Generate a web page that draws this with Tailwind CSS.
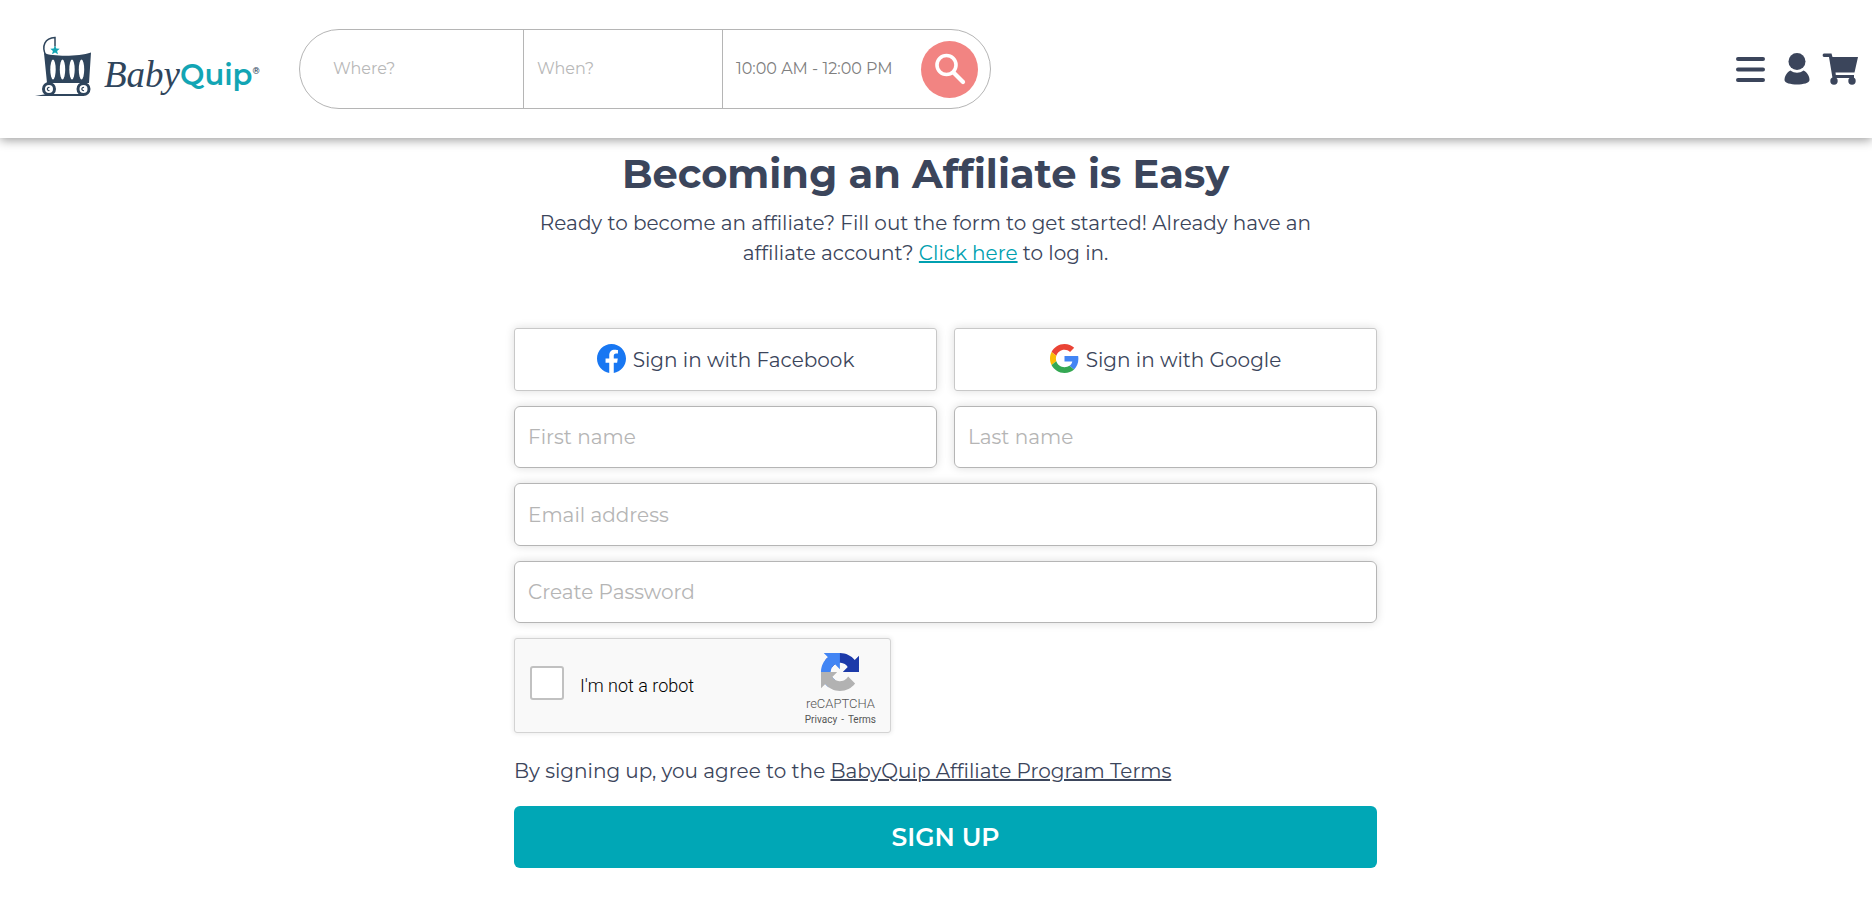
<!DOCTYPE html>
<html lang="en">

<head>
    <meta charset="utf-8">
    <meta name="viewport" content="width=device-width, initial-scale=1">
    <title>BabyQuip Affiliate Program</title>
    <script src="https://cdn.jsdelivr.net/npm/@tailwindcss/browser@4"></script>
</head>

<body class="bg-white font-['Montserrat','Inter',sans-serif] text-[#3b455b]">
    <!-- Top bar -->
    <header class="flex h-[138px] items-center bg-white pl-[34px] pr-[14px] shadow-[0_2px_10px_rgba(0,0,0,0.4)]">
        <a href="#" class="flex w-[265px] shrink-0 items-center" aria-label="BabyQuip">
            <svg class="mb-1 h-[62px] w-[60px] shrink-0" viewBox="0 0 60 62" fill="none">
                <path d="M12 20C7 10 11 2 21 1.500v9" stroke="#2f455c" stroke-width="1.500" />
                <path d="M21 9.500l1.300 3 3.400.3-2.600 2.200.9 3.300-3-1.800-3 1.800.9-3.300-2.600-2.200 3.400-.3z" fill="#12a5b4" />
                <path d="M10 17C18 20.500 44 21 57 16.500L55 47H13z" fill="#2f455c" />
                <g fill="#fff">
                    <ellipse cx="19" cy="33.500" rx="2.700" ry="10" />
                    <ellipse cx="28.500" cy="33.500" rx="2.700" ry="10" />
                    <ellipse cx="38" cy="33.500" rx="2.700" ry="10" />
                    <ellipse cx="47.500" cy="33.500" rx="2.700" ry="10" />
                    <path d="M20 49h28v8H20z" />
                </g>
                <path d="M1 60l12-2h37v2z" fill="#2f455c" />
                <g stroke="#2f455c">
                    <circle cx="15" cy="53" r="5.500" fill="#fff" stroke-width="3" />
                    <circle cx="49.500" cy="53" r="5.500" fill="#fff" stroke-width="3" />
                    <path d="M15.500 51.500a1.600 1.600 0 1 0 0 3M50 51.500a1.600 1.600 0 1 0 0 3" stroke-width="1.200" />
                </g>
            </svg>
            <span class="flex items-center pl-[10px] pt-3 leading-10">
                <span class="font-['Liberation_Serif',serif] text-[37px] italic text-[#2f455c]">Baby</span>
                <span class="text-[29px] font-semibold text-[#12a5b4]">Quip</span>
                <span class="pb-2 text-[9px] leading-4 font-semibold text-[#2f455c]">®</span>
            </span>
        </a>

        <form class="flex h-20 w-[692px] rounded-full border border-[#b5b5b5]">
            <label for="where" class="sr-only">Where?</label>
            <input id="where" type="text" placeholder="Where?"
                   class="w-[224px] border-r border-[#b5b5b5] pl-[33px] text-base outline-none placeholder:text-[#b8b8b8]">
            <label for="when" class="sr-only">When?</label>
            <input id="when" type="text" placeholder="When?"
                   class="w-[199px] border-r border-[#b5b5b5] pl-[13px] text-base outline-none placeholder:text-[#b8b8b8]">
            <div class="flex flex-1 items-center justify-between pl-[13px] pr-3">
                <button type="button" class="text-base text-[#7f7f7f]">10:00 AM - 12:00 PM</button>
                <button type="submit" aria-label="Search"
                        class="flex size-[57px] items-center justify-center rounded-full bg-[#f28482]">
                    <svg class="size-8" viewBox="0 0 32 32" fill="none" stroke="#fff" stroke-linecap="round">
                        <circle cx="12.500" cy="12" r="9.500" stroke-width="3.600" />
                        <path d="M20 20l9 9" stroke-width="4.200" />
                    </svg>
                </button>
            </div>
        </form>

        <nav class="ml-auto flex items-center gap-3">
            <button type="button" aria-label="Menu" class="mr-[7px]">
                <svg class="h-8 w-[29px]" viewBox="0 0 29 32" stroke="#3b455b" stroke-width="4" stroke-linecap="round">
                    <path d="M2 6h25M2 16.500h25M2 27h25" />
                </svg>
            </button>
            <a href="#" aria-label="Account">
                <svg class="h-8 w-[26px]" viewBox="0 0 26 32" fill="#3b455b">
                    <circle cx="13" cy="8.500" r="8.500" />
                    <path d="M6.500 17.500c4 3 9 3 13 0 4 2 6 6 6 9.500 0 6-25 6-25 0 0-3.500 2-7.500 6-9.500z" />
                </svg>
            </a>
            <a href="#" aria-label="Cart">
                <svg class="h-8 w-9" viewBox="0 0 36 32" fill="#3b455b">
                    <path d="M2 .5h7.500L10.500 4H36l-3.500 15.500H13.500l.3 2.500H32v3H10.500L7 4H2a1.800 1.800 0 0 1 0-3.500z" />
                    <circle cx="12" cy="28" r="3.700" />
                    <circle cx="30" cy="28" r="3.700" />
                </svg>
            </a>
        </nav>
    </header>

    <main class="pl-[19px]">
        <div class="mx-auto max-w-[863px]">
            <div class="pr-10 pt-3 text-center">
                <h1 class="text-[40px] font-bold leading-12">Becoming an Affiliate is Easy</h1>
                <p class="mt-[10px] px-6 text-xl leading-[30px]">Ready to become an affiliate? Fill out the form to get started! Already have an
                    affiliate account? <a href="#" class="text-[#00a0b0] underline">Click here</a> to log in.</p>
            </div>

            <form class="mt-[60px] flex flex-col gap-[15px] text-xl">
                <div class="grid grid-cols-2 gap-[17px]">
                    <button type="button"
                            class="flex h-[63px] items-center justify-center gap-[7px] rounded-[3px] border border-[#c8c8c8] shadow-[0_0_10px_rgba(0,0,0,0.14)]">
                        <svg class="mb-[2px] size-[29px]" viewBox="0 0 24 24">
                            <path fill="#1877f2" d="M24 12.073C24 5.405 18.627 0 12 0S0 5.405 0 12.073c0 6.026 4.388 11.020 10.125 11.927v-8.437H7.078v-3.490h3.047V9.413c0-3.026 1.792-4.697 4.533-4.697 1.312 0 2.686.236 2.686.236v2.971H15.830c-1.491 0-1.956.931-1.956 1.886v2.264h3.328l-.532 3.490h-2.796V24C19.612 23.093 24 18.099 24 12.073z" />
                        </svg>
                        Sign in with Facebook
                    </button>
                    <button type="button"
                            class="flex h-[63px] items-center justify-center gap-[7px] rounded-[3px] border border-[#c8c8c8] shadow-[0_0_10px_rgba(0,0,0,0.14)]">
                        <svg class="mb-[2px] size-[29px]" viewBox="0 0 48 48">
                            <path fill="#ea4335" d="M24 9.500c3.540 0 6.710 1.220 9.210 3.600l6.850-6.850C35.900 2.380 30.470 0 24 0 14.620 0 6.510 5.380 2.560 13.220l7.980 6.190C12.430 13.720 17.740 9.500 24 9.500z" />
                            <path fill="#4285f4" d="M46.980 24.550c0-1.570-.15-3.090-.38-4.550H24v9.020h12.940c-.58 2.960-2.260 5.480-4.780 7.180l7.730 6c4.510-4.180 7.090-10.360 7.090-17.650z" />
                            <path fill="#fbbc05" d="M10.530 28.590c-.48-1.450-.76-2.990-.76-4.590s.27-3.140.76-4.590l-7.980-6.190C.92 16.460 0 20.120 0 24c0 3.880.92 7.540 2.560 10.780l7.970-6.190z" />
                            <path fill="#34a853" d="M24 48c6.480 0 11.930-2.130 15.890-5.810l-7.730-6c-2.150 1.450-4.920 2.300-8.160 2.300-6.260 0-11.570-4.220-13.470-9.910l-7.980 6.190C6.510 42.620 14.620 48 24 48z" />
                        </svg>
                        Sign in with Google
                    </button>
                </div>

                <div class="grid grid-cols-2 gap-[17px]">
                    <div>
                        <label for="first-name" class="sr-only">First name</label>
                        <input id="first-name" type="text" placeholder="First name"
                               class="block h-[62px] w-full rounded-md border border-[#b5b5b5] px-[13px] shadow-[0_0_10px_rgba(0,0,0,0.14)] placeholder:text-[#b5b5b5]">
                    </div>
                    <div>
                        <label for="last-name" class="sr-only">Last name</label>
                        <input id="last-name" type="text" placeholder="Last name"
                               class="block h-[62px] w-full rounded-md border border-[#b5b5b5] px-[13px] shadow-[0_0_10px_rgba(0,0,0,0.14)] placeholder:text-[#b5b5b5]">
                    </div>
                </div>

                <div>
                    <label for="email" class="sr-only">Email address</label>
                    <input id="email" type="email" placeholder="Email address"
                           class="block h-[63px] w-full rounded-md border border-[#b5b5b5] px-[13px] shadow-[0_0_10px_rgba(0,0,0,0.14)] placeholder:text-[#b5b5b5]">
                </div>
                <div>
                    <label for="password" class="sr-only">Create Password</label>
                    <input id="password" type="password" placeholder="Create Password"
                           class="block h-[62px] w-full rounded-md border border-[#b5b5b5] px-[13px] shadow-[0_0_10px_rgba(0,0,0,0.14)] placeholder:text-[#b5b5b5]">
                </div>

                <!-- Captcha -->
                <div class="flex h-[95px] w-[377px] items-center rounded-[3px] border border-[#d3d3d3] bg-[#f9f9f9] pl-[15px] pr-[14px] font-['Roboto',sans-serif] shadow-[0_0_4px_1px_rgba(0,0,0,0.08)]">
                    <input id="robot" type="checkbox"
                           class="mb-[6px] size-[34px] appearance-none rounded-[3px] border-2 border-[#c1c1c1] bg-white">
                    <label for="robot" class="pl-4 text-lg font-light text-black">I'm not a robot</label>
                    <div class="ml-auto flex flex-col items-center pt-[10px] text-[#555]">
                        <svg class="size-[38px]" viewBox="0 0 64 64">
                            <path fill="#1c3aa9" d="M64 31.955l-.033-1.370V4.687l-7.160 7.160C50.948 4.674 42.033.093 32.050.093c-10.400 0-19.622 4.960-25.458 12.640l11.736 11.860a15.550 15.550 0 0 1 4.754-5.334c2.050-1.600 4.952-2.906 8.968-2.906.485 0 .86.057 1.135.163 4.976.393 9.288 3.140 11.828 7.124l-8.307 8.307L64 31.953" />
                            <path fill="#4285f4" d="M31.862.094l-1.370.033H4.594l7.160 7.160C4.580 13.147 0 22.060 0 32.046c0 10.400 4.960 19.622 12.640 25.458L24.500 45.768a15.550 15.550 0 0 1-5.334-4.754c-1.600-2.050-2.906-4.952-2.906-8.968 0-.485.057-.86.163-1.135.393-4.976 3.140-9.288 7.124-11.828l8.307 8.307L31.860.095" />
                            <path fill="#b2b2b2" d="M.001 32.045l.033 1.370v25.898l7.160-7.160c5.860 7.173 14.774 11.754 24.760 11.754 10.400 0 19.622-4.960 25.458-12.640l-11.736-11.860a15.550 15.550 0 0 1-4.754 5.334c-2.050 1.600-4.952 2.906-8.968 2.906-.485 0-.86-.057-1.135-.163-4.976-.393-9.288-3.140-11.828-7.124l8.307-8.307L0 32.046" />
                        </svg>
                        <span class="mt-[5px] text-[13px] leading-4 font-light">reCAPTCHA</span>
                        <span class="flex gap-1 text-[10px] leading-4"><a href="#">Privacy</a> - <a href="#">Terms</a></span>
                    </div>
                </div>

                <p class="mt-2 leading-[30px]">By signing up, you agree to the <a href="#" class="underline">BabyQuip Affiliate Program Terms</a></p>
                <button type="submit" class="mt-[5px] h-[62px] rounded-md bg-[#00a7b6] text-[25px] font-semibold text-white">SIGN UP</button>
            </form>
        </div>
    </main>
</body>

</html>
